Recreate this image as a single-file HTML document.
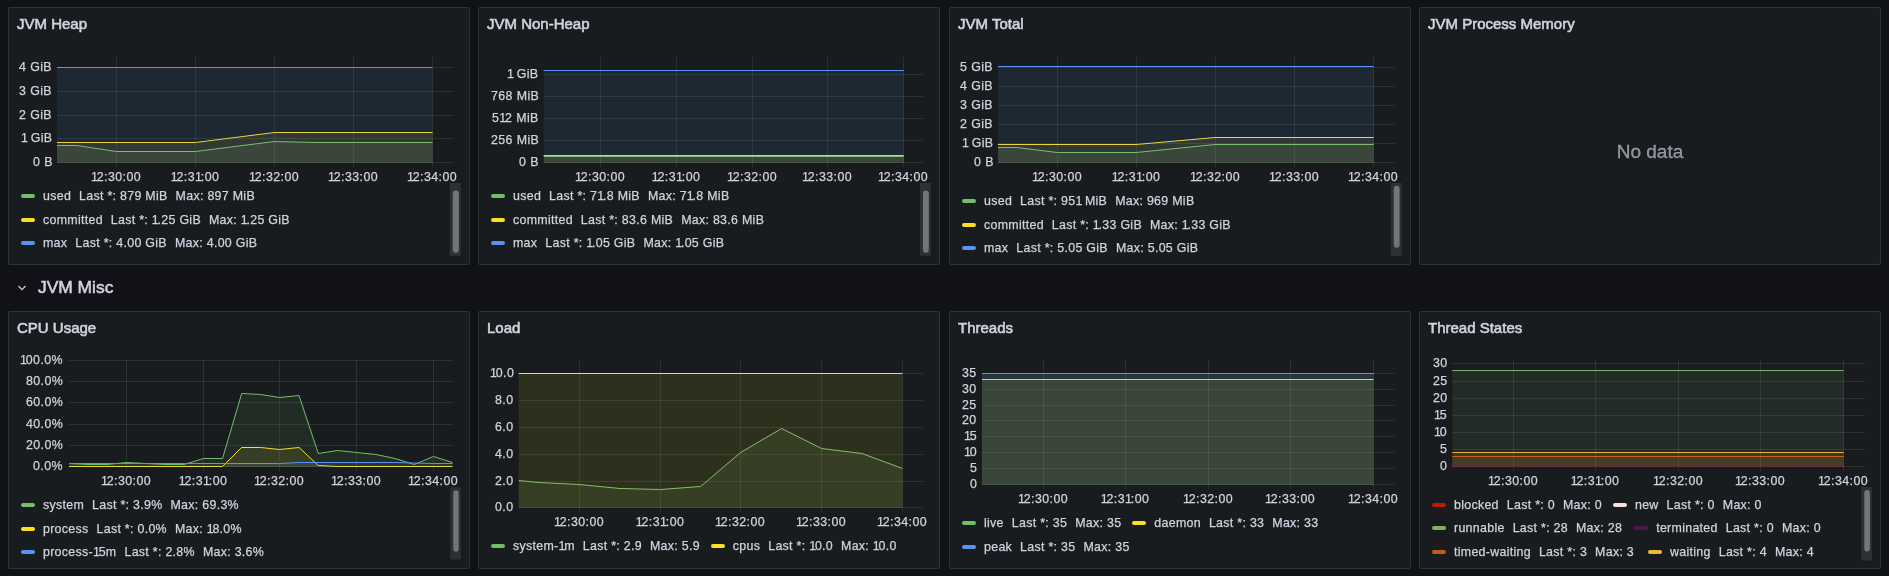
<!DOCTYPE html>
<html><head><meta charset="utf-8"><style>
*{margin:0;padding:0;box-sizing:border-box}
html,body{width:1889px;height:576px;overflow:hidden;background:#111217;font-family:"Liberation Sans", sans-serif;color:#d2d2e0}
div{will-change:transform}
.panel{position:absolute;width:462px;height:258px;background:#181c1e;border:1px solid rgba(204,204,220,0.12);border-radius:2px}
.title{position:absolute;font-size:15px;-webkit-text-stroke:0.6px #d2d2e0;line-height:18px;height:18px;white-space:nowrap}
.lbl{position:absolute;font-size:12.4px;letter-spacing:0.4px;-webkit-text-stroke:0.25px #d2d2e0;line-height:16px;height:16px;white-space:nowrap}
.lbl.c{width:100px;text-align:center}
.leg{position:absolute;font-size:12.4px;letter-spacing:0.3px;-webkit-text-stroke:0.25px #d2d2e0;line-height:16px;height:16px;white-space:nowrap;display:flex}
.li{display:flex;align-items:center;margin-right:11px}
.li i{display:block;width:14px;height:4px;border-radius:2px;margin-right:8px}
.st{margin-left:8px}
.nodata{position:absolute;width:200px;text-align:center;font-size:19px;-webkit-text-stroke:0.3px rgba(204,204,220,0.65);line-height:24px;color:rgba(204,204,220,0.65)}
.rowt{position:absolute;font-size:17.4px;-webkit-text-stroke:0.55px #d2d2e0;line-height:20px;white-space:nowrap}
svg{position:absolute;left:0;top:0}
b{font-weight:normal;letter-spacing:-1.2px}
.lbl b{letter-spacing:-1.1px}
.g{stroke:rgba(240,250,255,0.09);stroke-width:1}
</style></head><body>
<div class="panel" style="left:8px;top:7px"></div>
<div class="panel" style="left:478px;top:7px"></div>
<div class="panel" style="left:949px;top:7px"></div>
<div class="panel" style="left:1419px;top:7px"></div>
<div class="panel" style="left:8px;top:311px"></div>
<div class="panel" style="left:478px;top:311px"></div>
<div class="panel" style="left:949px;top:311px"></div>
<div class="panel" style="left:1419px;top:311px"></div>
<svg width="1889" height="576" viewBox="0 0 1889 576">
<line x1="57" y1="162.5" x2="453.5" y2="162.5" class="g"/>
<line x1="57" y1="138.5" x2="453.5" y2="138.5" class="g"/>
<line x1="57" y1="115.5" x2="453.5" y2="115.5" class="g"/>
<line x1="57" y1="91.5" x2="453.5" y2="91.5" class="g"/>
<line x1="57" y1="67.5" x2="453.5" y2="67.5" class="g"/>
<line x1="116.5" y1="56.5" x2="116.5" y2="167" class="g"/>
<line x1="195.5" y1="56.5" x2="195.5" y2="167" class="g"/>
<line x1="274.5" y1="56.5" x2="274.5" y2="167" class="g"/>
<line x1="353.5" y1="56.5" x2="353.5" y2="167" class="g"/>
<line x1="432.5" y1="56.5" x2="432.5" y2="167" class="g"/>
<path d="M57,145.5 L76.8,145.5 L116.3,151.5 L195.4,151.5 L274.5,141.5 L314,142.5 L432.5,142.5 L432.5,163 L57,163 Z" fill="#73BF69" fill-opacity="0.1" stroke="none"/>
<path d="M57,145.5 L76.8,145.5 L116.3,151.5 L195.4,151.5 L274.5,141.5 L314,142.5 L432.5,142.5" fill="none" stroke="#73BF69" stroke-width="1" stroke-linejoin="round"/>
<path d="M57,142.5 L195.4,142.5 L274.5,132.5 L432.5,132.5 L432.5,163 L57,163 Z" fill="#FADE2A" fill-opacity="0.1" stroke="none"/>
<path d="M57,142.5 L195.4,142.5 L274.5,132.5 L432.5,132.5" fill="none" stroke="#FADE2A" stroke-width="1" stroke-linejoin="round"/>
<path d="M57,67.5 L432.5,67.5 L432.5,163 L57,163 Z" fill="#5794F2" fill-opacity="0.1" stroke="none"/>
<path d="M57,67.5 L432.5,67.5" fill="none" stroke="#5794F2" stroke-width="1" stroke-linejoin="round"/>
<rect x="449.8" y="183" width="11.0" height="72.9" fill="#2e3033"/>
<rect x="452.8" y="190.6" width="6.0" height="62.20000000000002" rx="3" fill="#747578"/>
<line x1="543.7" y1="162.5" x2="923.5" y2="162.5" class="g"/>
<line x1="543.7" y1="140.5" x2="923.5" y2="140.5" class="g"/>
<line x1="543.7" y1="118.5" x2="923.5" y2="118.5" class="g"/>
<line x1="543.7" y1="96.5" x2="923.5" y2="96.5" class="g"/>
<line x1="543.7" y1="74.5" x2="923.5" y2="74.5" class="g"/>
<line x1="600.5" y1="56.5" x2="600.5" y2="167" class="g"/>
<line x1="676.5" y1="56.5" x2="676.5" y2="167" class="g"/>
<line x1="752.5" y1="56.5" x2="752.5" y2="167" class="g"/>
<line x1="827.5" y1="56.5" x2="827.5" y2="167" class="g"/>
<line x1="903.5" y1="56.5" x2="903.5" y2="167" class="g"/>
<path d="M543.7,156.5 L903.7,156.5 L903.7,163 L543.7,163 Z" fill="#73BF69" fill-opacity="0.1" stroke="none"/>
<path d="M543.7,156.5 L903.7,156.5" fill="none" stroke="#73BF69" stroke-width="1" stroke-linejoin="round"/>
<path d="M543.7,155.5 L903.7,155.5 L903.7,163 L543.7,163 Z" fill="#FADE2A" fill-opacity="0.1" stroke="none"/>
<path d="M543.7,155.5 L903.7,155.5" fill="none" stroke="#FADE2A" stroke-width="1" stroke-linejoin="round"/>
<path d="M543.7,70.5 L903.7,70.5 L903.7,163 L543.7,163 Z" fill="#5794F2" fill-opacity="0.1" stroke="none"/>
<path d="M543.7,70.5 L903.7,70.5" fill="none" stroke="#5794F2" stroke-width="1" stroke-linejoin="round"/>
<rect x="920" y="183" width="10.799999999999955" height="72.9" fill="#2e3033"/>
<rect x="923" y="190.6" width="5.7999999999999545" height="62.20000000000002" rx="3" fill="#747578"/>
<line x1="997.9" y1="162.5" x2="1394.5" y2="162.5" class="g"/>
<line x1="997.9" y1="143.5" x2="1394.5" y2="143.5" class="g"/>
<line x1="997.9" y1="124.5" x2="1394.5" y2="124.5" class="g"/>
<line x1="997.9" y1="105.5" x2="1394.5" y2="105.5" class="g"/>
<line x1="997.9" y1="86.5" x2="1394.5" y2="86.5" class="g"/>
<line x1="997.9" y1="67.5" x2="1394.5" y2="67.5" class="g"/>
<line x1="1057.5" y1="56.5" x2="1057.5" y2="167" class="g"/>
<line x1="1136.5" y1="56.5" x2="1136.5" y2="167" class="g"/>
<line x1="1215.5" y1="56.5" x2="1215.5" y2="167" class="g"/>
<line x1="1294.5" y1="56.5" x2="1294.5" y2="167" class="g"/>
<line x1="1373.5" y1="56.5" x2="1373.5" y2="167" class="g"/>
<path d="M997.9,147.5 L1017.1,147.5 L1057.3,152.5 L1136.1,152.5 L1215.1,144.5 L1373.7,144.5 L1373.7,163 L997.9,163 Z" fill="#73BF69" fill-opacity="0.1" stroke="none"/>
<path d="M997.9,147.5 L1017.1,147.5 L1057.3,152.5 L1136.1,152.5 L1215.1,144.5 L1373.7,144.5" fill="none" stroke="#73BF69" stroke-width="1" stroke-linejoin="round"/>
<path d="M997.9,144.5 L1136.1,144.5 L1215.1,137.5 L1373.7,137.5 L1373.7,163 L997.9,163 Z" fill="#FADE2A" fill-opacity="0.1" stroke="none"/>
<path d="M997.9,144.5 L1136.1,144.5 L1215.1,137.5 L1373.7,137.5" fill="none" stroke="#FADE2A" stroke-width="1" stroke-linejoin="round"/>
<path d="M997.9,66.5 L1373.7,66.5 L1373.7,163 L997.9,163 Z" fill="#5794F2" fill-opacity="0.1" stroke="none"/>
<path d="M997.9,66.5 L1373.7,66.5" fill="none" stroke="#5794F2" stroke-width="1" stroke-linejoin="round"/>
<rect x="1390.8" y="183" width="10.799999999999955" height="72.9" fill="#2e3033"/>
<rect x="1393.8" y="185.8" width="5.7999999999999545" height="61.89999999999998" rx="3" fill="#747578"/>
<path d="M18.5,286 L22,289.6 L25.5,286" fill="none" stroke="#ccccdc" stroke-width="1.3"/>
<line x1="69" y1="466.5" x2="453.5" y2="466.5" class="g"/>
<line x1="69" y1="445.5" x2="453.5" y2="445.5" class="g"/>
<line x1="69" y1="424.5" x2="453.5" y2="424.5" class="g"/>
<line x1="69" y1="402.5" x2="453.5" y2="402.5" class="g"/>
<line x1="69" y1="381.5" x2="453.5" y2="381.5" class="g"/>
<line x1="69" y1="360.5" x2="453.5" y2="360.5" class="g"/>
<line x1="126.5" y1="360" x2="126.5" y2="471" class="g"/>
<line x1="203.5" y1="360" x2="203.5" y2="471" class="g"/>
<line x1="279.5" y1="360" x2="279.5" y2="471" class="g"/>
<line x1="356.5" y1="360" x2="356.5" y2="471" class="g"/>
<line x1="433.5" y1="360" x2="433.5" y2="471" class="g"/>
<path d="M69,463.5 L88,464.5 L107,464.5 L126.5,462.5 L146,463.5 L165,464.5 L184,464.5 L203.5,458.5 L222.5,458.5 L241.7,393.5 L260.7,394.5 L279.5,397.5 L299,395.5 L318.3,453.5 L337.5,450.5 L356.8,452.5 L375.9,454.5 L395,458.5 L414.3,464.5 L433.5,456.5 L452.5,462.5 L452.5,467 L69,467 Z" fill="#73BF69" fill-opacity="0.1" stroke="none"/>
<path d="M69,463.5 L88,464.5 L107,464.5 L126.5,462.5 L146,463.5 L165,464.5 L184,464.5 L203.5,458.5 L222.5,458.5 L241.7,393.5 L260.7,394.5 L279.5,397.5 L299,395.5 L318.3,453.5 L337.5,450.5 L356.8,452.5 L375.9,454.5 L395,458.5 L414.3,464.5 L433.5,456.5 L452.5,462.5" fill="none" stroke="#73BF69" stroke-width="1" stroke-linejoin="round"/>
<path d="M69,466.5 L222.5,466.5 L241.5,447.5 L260.7,447.5 L279.5,449.5 L299,447.5 L318.3,465.5 L337.5,466.5 L452.5,466.5 L452.5,467 L69,467 Z" fill="#FADE2A" fill-opacity="0.1" stroke="none"/>
<path d="M69,466.5 L222.5,466.5 L241.5,447.5 L260.7,447.5 L279.5,449.5 L299,447.5 L318.3,465.5 L337.5,466.5 L452.5,466.5" fill="none" stroke="#FADE2A" stroke-width="1" stroke-linejoin="round"/>
<path d="M69,463.5 L279.5,463.5 L299,462.5 L395,462.5 L433.5,463.5 L452.5,463.5 L452.5,467 L69,467 Z" fill="#5794F2" fill-opacity="0.1" stroke="none"/>
<path d="M69,463.5 L279.5,463.5 L299,462.5 L395,462.5 L433.5,463.5 L452.5,463.5" fill="none" stroke="#5794F2" stroke-width="1" stroke-linejoin="round"/>
<rect x="450.3" y="487.3" width="10.399999999999977" height="72.19999999999999" fill="#2e3033"/>
<rect x="453.3" y="490.3" width="5.399999999999977" height="61.49999999999994" rx="3" fill="#747578"/>
<line x1="518.7" y1="507.5" x2="923.5" y2="507.5" class="g"/>
<line x1="518.7" y1="481.5" x2="923.5" y2="481.5" class="g"/>
<line x1="518.7" y1="454.5" x2="923.5" y2="454.5" class="g"/>
<line x1="518.7" y1="427.5" x2="923.5" y2="427.5" class="g"/>
<line x1="518.7" y1="400.5" x2="923.5" y2="400.5" class="g"/>
<line x1="518.7" y1="373.5" x2="923.5" y2="373.5" class="g"/>
<line x1="579.5" y1="361" x2="579.5" y2="512" class="g"/>
<line x1="660.5" y1="361" x2="660.5" y2="512" class="g"/>
<line x1="740.5" y1="361" x2="740.5" y2="512" class="g"/>
<line x1="821.5" y1="361" x2="821.5" y2="512" class="g"/>
<line x1="902.5" y1="361" x2="902.5" y2="512" class="g"/>
<path d="M518.7,480.5 L538.9,482.5 L579.3,484.5 L620,488.5 L660.4,489.5 L700.6,486.5 L740.6,452.5 L781.6,428.5 L821.6,448.5 L862,453.5 L902.5,468.5 L902.5,508 L518.7,508 Z" fill="#73BF69" fill-opacity="0.1" stroke="none"/>
<path d="M518.7,480.5 L538.9,482.5 L579.3,484.5 L620,488.5 L660.4,489.5 L700.6,486.5 L740.6,452.5 L781.6,428.5 L821.6,448.5 L862,453.5 L902.5,468.5" fill="none" stroke="#73BF69" stroke-width="1" stroke-linejoin="round"/>
<path d="M518.7,373.5 L902.5,373.5 L902.5,508 L518.7,508 Z" fill="#FADE2A" fill-opacity="0.1" stroke="none"/>
<path d="M518.7,373.5 L902.5,373.5" fill="none" stroke="#FADE2A" stroke-width="1" stroke-linejoin="round"/>
<line x1="982" y1="484.5" x2="1394.5" y2="484.5" class="g"/>
<line x1="982" y1="468.5" x2="1394.5" y2="468.5" class="g"/>
<line x1="982" y1="452.5" x2="1394.5" y2="452.5" class="g"/>
<line x1="982" y1="436.5" x2="1394.5" y2="436.5" class="g"/>
<line x1="982" y1="420.5" x2="1394.5" y2="420.5" class="g"/>
<line x1="982" y1="405.5" x2="1394.5" y2="405.5" class="g"/>
<line x1="982" y1="389.5" x2="1394.5" y2="389.5" class="g"/>
<line x1="982" y1="373.5" x2="1394.5" y2="373.5" class="g"/>
<line x1="1043.5" y1="360" x2="1043.5" y2="489" class="g"/>
<line x1="1125.5" y1="360" x2="1125.5" y2="489" class="g"/>
<line x1="1208.5" y1="360" x2="1208.5" y2="489" class="g"/>
<line x1="1290.5" y1="360" x2="1290.5" y2="489" class="g"/>
<line x1="1373.5" y1="360" x2="1373.5" y2="489" class="g"/>
<path d="M982,373.5 L1373.6,373.5 L1373.6,485 L982,485 Z" fill="#73BF69" fill-opacity="0.1" stroke="none"/>
<path d="M982,373.5 L1373.6,373.5" fill="none" stroke="#73BF69" stroke-width="1" stroke-linejoin="round"/>
<path d="M982,379.5 L1373.6,379.5 L1373.6,485 L982,485 Z" fill="#FADE2A" fill-opacity="0.1" stroke="none"/>
<path d="M982,379.5 L1373.6,379.5" fill="none" stroke="#FADE2A" stroke-width="1" stroke-linejoin="round"/>
<path d="M982,373.5 L1373.6,373.5 L1373.6,485 L982,485 Z" fill="#5794F2" fill-opacity="0.1" stroke="none"/>
<path d="M982,373.5 L1373.6,373.5" fill="none" stroke="#5794F2" stroke-width="1" stroke-linejoin="round"/>
<line x1="1452.3" y1="466.5" x2="1865" y2="466.5" class="g"/>
<line x1="1452.3" y1="449.5" x2="1865" y2="449.5" class="g"/>
<line x1="1452.3" y1="432.5" x2="1865" y2="432.5" class="g"/>
<line x1="1452.3" y1="415.5" x2="1865" y2="415.5" class="g"/>
<line x1="1452.3" y1="398.5" x2="1865" y2="398.5" class="g"/>
<line x1="1452.3" y1="381.5" x2="1865" y2="381.5" class="g"/>
<line x1="1452.3" y1="363.5" x2="1865" y2="363.5" class="g"/>
<line x1="1513.5" y1="360" x2="1513.5" y2="471" class="g"/>
<line x1="1595.5" y1="360" x2="1595.5" y2="471" class="g"/>
<line x1="1678.5" y1="360" x2="1678.5" y2="471" class="g"/>
<line x1="1760.5" y1="360" x2="1760.5" y2="471" class="g"/>
<line x1="1843.5" y1="360" x2="1843.5" y2="471" class="g"/>
<path d="M1452.3,466.5 L1843.7,466.5 L1843.7,467 L1452.3,467 Z" fill="#BF1B00" fill-opacity="0.1" stroke="none"/>
<path d="M1452.3,466.5 L1843.7,466.5" fill="none" stroke="#BF1B00" stroke-width="1" stroke-linejoin="round"/>
<path d="M1452.3,466.5 L1843.7,466.5 L1843.7,467 L1452.3,467 Z" fill="#FCE2DE" fill-opacity="0.1" stroke="none"/>
<path d="M1452.3,466.5 L1843.7,466.5" fill="none" stroke="#FCE2DE" stroke-width="1" stroke-linejoin="round"/>
<path d="M1452.3,370.5 L1843.7,370.5 L1843.7,467 L1452.3,467 Z" fill="#7EB26D" fill-opacity="0.1" stroke="none"/>
<path d="M1452.3,370.5 L1843.7,370.5" fill="none" stroke="#7EB26D" stroke-width="1" stroke-linejoin="round"/>
<path d="M1452.3,466.5 L1843.7,466.5 L1843.7,467 L1452.3,467 Z" fill="#511749" fill-opacity="0.1" stroke="none"/>
<path d="M1452.3,466.5 L1843.7,466.5" fill="none" stroke="#511749" stroke-width="1" stroke-linejoin="round"/>
<path d="M1452.3,456.5 L1843.7,456.5 L1843.7,467 L1452.3,467 Z" fill="#C15C17" fill-opacity="0.1" stroke="none"/>
<path d="M1452.3,456.5 L1843.7,456.5" fill="none" stroke="#C15C17" stroke-width="1" stroke-linejoin="round"/>
<path d="M1452.3,452.5 L1843.7,452.5 L1843.7,467 L1452.3,467 Z" fill="#EAB839" fill-opacity="0.1" stroke="none"/>
<path d="M1452.3,452.5 L1843.7,452.5" fill="none" stroke="#EAB839" stroke-width="1" stroke-linejoin="round"/>
<rect x="1861.3" y="487" width="10.600000000000136" height="73.5" fill="#2e3033"/>
<rect x="1864.3" y="490" width="5.600000000000136" height="61.60000000000002" rx="3" fill="#747578"/>
</svg>
<div class="title" style="left:17px;top:14.600000000000001px">JVM Heap</div>
<div class="lbl r" style="right:1836.7px;top:154.0px">0 B</div>
<div class="lbl r" style="right:1836.7px;top:130.0px"><b>1</b> GiB</div>
<div class="lbl r" style="right:1836.7px;top:107.0px">2 GiB</div>
<div class="lbl r" style="right:1836.7px;top:83.0px">3 GiB</div>
<div class="lbl r" style="right:1836.7px;top:59.0px">4 GiB</div>
<div class="lbl c" style="left:65.5px;top:168.6px"><b>1</b>2:30:00</div>
<div class="lbl c" style="left:144.5px;top:168.6px"><b>1</b>2:3<b>1</b>:00</div>
<div class="lbl c" style="left:223.5px;top:168.6px"><b>1</b>2:32:00</div>
<div class="lbl c" style="left:302.5px;top:168.6px"><b>1</b>2:33:00</div>
<div class="lbl c" style="left:381.5px;top:168.6px"><b>1</b>2:34:00</div>
<div class="leg" style="left:21px;top:187.8px"><span class="li" style="margin-right:11px"><i style="background:#73BF69"></i><span class="nm">used</span><span class="st">Last *: 879 MiB</span><span class="st">Max: 897 MiB</span></span></div>
<div class="leg" style="left:21px;top:211.5px"><span class="li" style="margin-right:11px"><i style="background:#FADE2A"></i><span class="nm">committed</span><span class="st">Last *: <b>1</b>.25 GiB</span><span class="st">Max: <b>1</b>.25 GiB</span></span></div>
<div class="leg" style="left:21px;top:234.9px"><span class="li" style="margin-right:11px"><i style="background:#5794F2"></i><span class="nm">max</span><span class="st">Last *: 4.00 GiB</span><span class="st">Max: 4.00 GiB</span></span></div>
<div class="title" style="left:487px;top:14.600000000000001px">JVM Non-Heap</div>
<div class="lbl r" style="right:1350.2px;top:154.0px">0 B</div>
<div class="lbl r" style="right:1350.2px;top:132.0px">256 MiB</div>
<div class="lbl r" style="right:1350.2px;top:110.0px">5<b>1</b>2 MiB</div>
<div class="lbl r" style="right:1350.2px;top:88.0px">768 MiB</div>
<div class="lbl r" style="right:1350.2px;top:66.0px"><b>1</b> GiB</div>
<div class="lbl c" style="left:549.5px;top:168.6px"><b>1</b>2:30:00</div>
<div class="lbl c" style="left:625.5px;top:168.6px"><b>1</b>2:3<b>1</b>:00</div>
<div class="lbl c" style="left:701.5px;top:168.6px"><b>1</b>2:32:00</div>
<div class="lbl c" style="left:776.5px;top:168.6px"><b>1</b>2:33:00</div>
<div class="lbl c" style="left:852.5px;top:168.6px"><b>1</b>2:34:00</div>
<div class="leg" style="left:491px;top:187.8px"><span class="li" style="margin-right:11px"><i style="background:#73BF69"></i><span class="nm">used</span><span class="st">Last *: 7<b>1</b>.8 MiB</span><span class="st">Max: 7<b>1</b>.8 MiB</span></span></div>
<div class="leg" style="left:491px;top:211.5px"><span class="li" style="margin-right:11px"><i style="background:#FADE2A"></i><span class="nm">committed</span><span class="st">Last *: 83.6 MiB</span><span class="st">Max: 83.6 MiB</span></span></div>
<div class="leg" style="left:491px;top:234.9px"><span class="li" style="margin-right:11px"><i style="background:#5794F2"></i><span class="nm">max</span><span class="st">Last *: <b>1</b>.05 GiB</span><span class="st">Max: <b>1</b>.05 GiB</span></span></div>
<div class="title" style="left:958px;top:14.600000000000001px">JVM Total</div>
<div class="lbl r" style="right:895.7px;top:154.0px">0 B</div>
<div class="lbl r" style="right:895.7px;top:135.0px"><b>1</b> GiB</div>
<div class="lbl r" style="right:895.7px;top:116.0px">2 GiB</div>
<div class="lbl r" style="right:895.7px;top:97.0px">3 GiB</div>
<div class="lbl r" style="right:895.7px;top:78.0px">4 GiB</div>
<div class="lbl r" style="right:895.7px;top:59.0px">5 GiB</div>
<div class="lbl c" style="left:1006.5px;top:168.6px"><b>1</b>2:30:00</div>
<div class="lbl c" style="left:1085.5px;top:168.6px"><b>1</b>2:3<b>1</b>:00</div>
<div class="lbl c" style="left:1164.5px;top:168.6px"><b>1</b>2:32:00</div>
<div class="lbl c" style="left:1243.5px;top:168.6px"><b>1</b>2:33:00</div>
<div class="lbl c" style="left:1322.5px;top:168.6px"><b>1</b>2:34:00</div>
<div class="leg" style="left:962px;top:192.8px"><span class="li" style="margin-right:11px"><i style="background:#73BF69"></i><span class="nm">used</span><span class="st">Last *: 95<b>1</b> MiB</span><span class="st">Max: 969 MiB</span></span></div>
<div class="leg" style="left:962px;top:216.6px"><span class="li" style="margin-right:11px"><i style="background:#FADE2A"></i><span class="nm">committed</span><span class="st">Last *: <b>1</b>.33 GiB</span><span class="st">Max: <b>1</b>.33 GiB</span></span></div>
<div class="leg" style="left:962px;top:239.5px"><span class="li" style="margin-right:11px"><i style="background:#5794F2"></i><span class="nm">max</span><span class="st">Last *: 5.05 GiB</span><span class="st">Max: 5.05 GiB</span></span></div>
<div class="title" style="left:1428px;top:14.600000000000001px">JVM Process Memory</div>
<div class="nodata" style="left:1550px;top:140px">No data</div>
<div class="rowt" style="left:38px;top:277px">JVM Misc</div>
<div class="title" style="left:17px;top:318.6px">CPU Usage</div>
<div class="lbl r" style="right:1825.7px;top:458.0px">0.0%</div>
<div class="lbl r" style="right:1825.7px;top:437.0px">20.0%</div>
<div class="lbl r" style="right:1825.7px;top:416.0px">40.0%</div>
<div class="lbl r" style="right:1825.7px;top:394.0px">60.0%</div>
<div class="lbl r" style="right:1825.7px;top:373.0px">80.0%</div>
<div class="lbl r" style="right:1825.7px;top:352.0px"><b>1</b>00.0%</div>
<div class="lbl c" style="left:75.5px;top:472.7px"><b>1</b>2:30:00</div>
<div class="lbl c" style="left:152.5px;top:472.7px"><b>1</b>2:3<b>1</b>:00</div>
<div class="lbl c" style="left:228.5px;top:472.7px"><b>1</b>2:32:00</div>
<div class="lbl c" style="left:305.5px;top:472.7px"><b>1</b>2:33:00</div>
<div class="lbl c" style="left:382.5px;top:472.7px"><b>1</b>2:34:00</div>
<div class="leg" style="left:21px;top:496.8px"><span class="li" style="margin-right:11px"><i style="background:#73BF69"></i><span class="nm">system</span><span class="st">Last *: 3.9%</span><span class="st">Max: 69.3%</span></span></div>
<div class="leg" style="left:21px;top:521px"><span class="li" style="margin-right:11px"><i style="background:#FADE2A"></i><span class="nm">process</span><span class="st">Last *: 0.0%</span><span class="st">Max: <b>1</b>8.0%</span></span></div>
<div class="leg" style="left:21px;top:543.8px"><span class="li" style="margin-right:11px"><i style="background:#5794F2"></i><span class="nm">process-<b>1</b>5m</span><span class="st">Last *: 2.8%</span><span class="st">Max: 3.6%</span></span></div>
<div class="title" style="left:487px;top:318.6px">Load</div>
<div class="lbl r" style="right:1375.2px;top:499.0px">0.0</div>
<div class="lbl r" style="right:1375.2px;top:473.0px">2.0</div>
<div class="lbl r" style="right:1375.2px;top:446.0px">4.0</div>
<div class="lbl r" style="right:1375.2px;top:419.0px">6.0</div>
<div class="lbl r" style="right:1375.2px;top:392.0px">8.0</div>
<div class="lbl r" style="right:1375.2px;top:365.0px"><b>1</b>0.0</div>
<div class="lbl c" style="left:528.5px;top:513.7px"><b>1</b>2:30:00</div>
<div class="lbl c" style="left:609.5px;top:513.7px"><b>1</b>2:3<b>1</b>:00</div>
<div class="lbl c" style="left:689.5px;top:513.7px"><b>1</b>2:32:00</div>
<div class="lbl c" style="left:770.5px;top:513.7px"><b>1</b>2:33:00</div>
<div class="lbl c" style="left:851.5px;top:513.7px"><b>1</b>2:34:00</div>
<div class="leg" style="left:491px;top:538px"><span class="li" style="margin-right:11px"><i style="background:#73BF69"></i><span class="nm">system-<b>1</b>m</span><span class="st">Last *: 2.9</span><span class="st">Max: 5.9</span></span><span class="li" style="margin-right:11px"><i style="background:#FADE2A"></i><span class="nm">cpus</span><span class="st">Last *: <b>1</b>0.0</span><span class="st">Max: <b>1</b>0.0</span></span></div>
<div class="title" style="left:958px;top:318.6px">Threads</div>
<div class="lbl r" style="right:912.1px;top:476.0px">0</div>
<div class="lbl r" style="right:912.1px;top:460.0px">5</div>
<div class="lbl r" style="right:912.1px;top:444.0px"><b>1</b>0</div>
<div class="lbl r" style="right:912.1px;top:428.0px"><b>1</b>5</div>
<div class="lbl r" style="right:912.1px;top:412.0px">20</div>
<div class="lbl r" style="right:912.1px;top:397.0px">25</div>
<div class="lbl r" style="right:912.1px;top:381.0px">30</div>
<div class="lbl r" style="right:912.1px;top:365.0px">35</div>
<div class="lbl c" style="left:992.5px;top:490.5px"><b>1</b>2:30:00</div>
<div class="lbl c" style="left:1074.5px;top:490.5px"><b>1</b>2:3<b>1</b>:00</div>
<div class="lbl c" style="left:1157.5px;top:490.5px"><b>1</b>2:32:00</div>
<div class="lbl c" style="left:1239.5px;top:490.5px"><b>1</b>2:33:00</div>
<div class="lbl c" style="left:1322.5px;top:490.5px"><b>1</b>2:34:00</div>
<div class="leg" style="left:962px;top:515.1px"><span class="li" style="margin-right:11px"><i style="background:#73BF69"></i><span class="nm">live</span><span class="st">Last *: 35</span><span class="st">Max: 35</span></span><span class="li" style="margin-right:11px"><i style="background:#FADE2A"></i><span class="nm">daemon</span><span class="st">Last *: 33</span><span class="st">Max: 33</span></span></div>
<div class="leg" style="left:962px;top:538.6px"><span class="li" style="margin-right:11px"><i style="background:#5794F2"></i><span class="nm">peak</span><span class="st">Last *: 35</span><span class="st">Max: 35</span></span></div>
<div class="title" style="left:1428px;top:318.6px">Thread States</div>
<div class="lbl r" style="right:441.70000000000005px;top:458.0px">0</div>
<div class="lbl r" style="right:441.70000000000005px;top:441.0px">5</div>
<div class="lbl r" style="right:441.70000000000005px;top:424.0px"><b>1</b>0</div>
<div class="lbl r" style="right:441.70000000000005px;top:407.0px"><b>1</b>5</div>
<div class="lbl r" style="right:441.70000000000005px;top:390.0px">20</div>
<div class="lbl r" style="right:441.70000000000005px;top:373.0px">25</div>
<div class="lbl r" style="right:441.70000000000005px;top:355.0px">30</div>
<div class="lbl c" style="left:1462.5px;top:472.5px"><b>1</b>2:30:00</div>
<div class="lbl c" style="left:1544.5px;top:472.5px"><b>1</b>2:3<b>1</b>:00</div>
<div class="lbl c" style="left:1627.5px;top:472.5px"><b>1</b>2:32:00</div>
<div class="lbl c" style="left:1709.5px;top:472.5px"><b>1</b>2:33:00</div>
<div class="lbl c" style="left:1792.5px;top:472.5px"><b>1</b>2:34:00</div>
<div class="leg" style="left:1432px;top:496.5px"><span class="li" style="margin-right:11px"><i style="background:#BF1B00"></i><span class="nm">blocked</span><span class="st">Last *: 0</span><span class="st">Max: 0</span></span><span class="li" style="margin-right:11px"><i style="background:#FCE2DE"></i><span class="nm">new</span><span class="st">Last *: 0</span><span class="st">Max: 0</span></span></div>
<div class="leg" style="left:1432px;top:519.6px"><span class="li" style="margin-right:12px"><i style="background:#7EB26D"></i><span class="nm">runnable</span><span class="st">Last *: 28</span><span class="st">Max: 28</span></span><span class="li" style="margin-right:12px"><i style="background:#511749"></i><span class="nm">terminated</span><span class="st">Last *: 0</span><span class="st">Max: 0</span></span></div>
<div class="leg" style="left:1432px;top:543.6px"><span class="li" style="margin-right:14px"><i style="background:#C15C17"></i><span class="nm">timed-waiting</span><span class="st">Last *: 3</span><span class="st">Max: 3</span></span><span class="li" style="margin-right:14px"><i style="background:#EAB839"></i><span class="nm">waiting</span><span class="st">Last *: 4</span><span class="st">Max: 4</span></span></div>
</body></html>
